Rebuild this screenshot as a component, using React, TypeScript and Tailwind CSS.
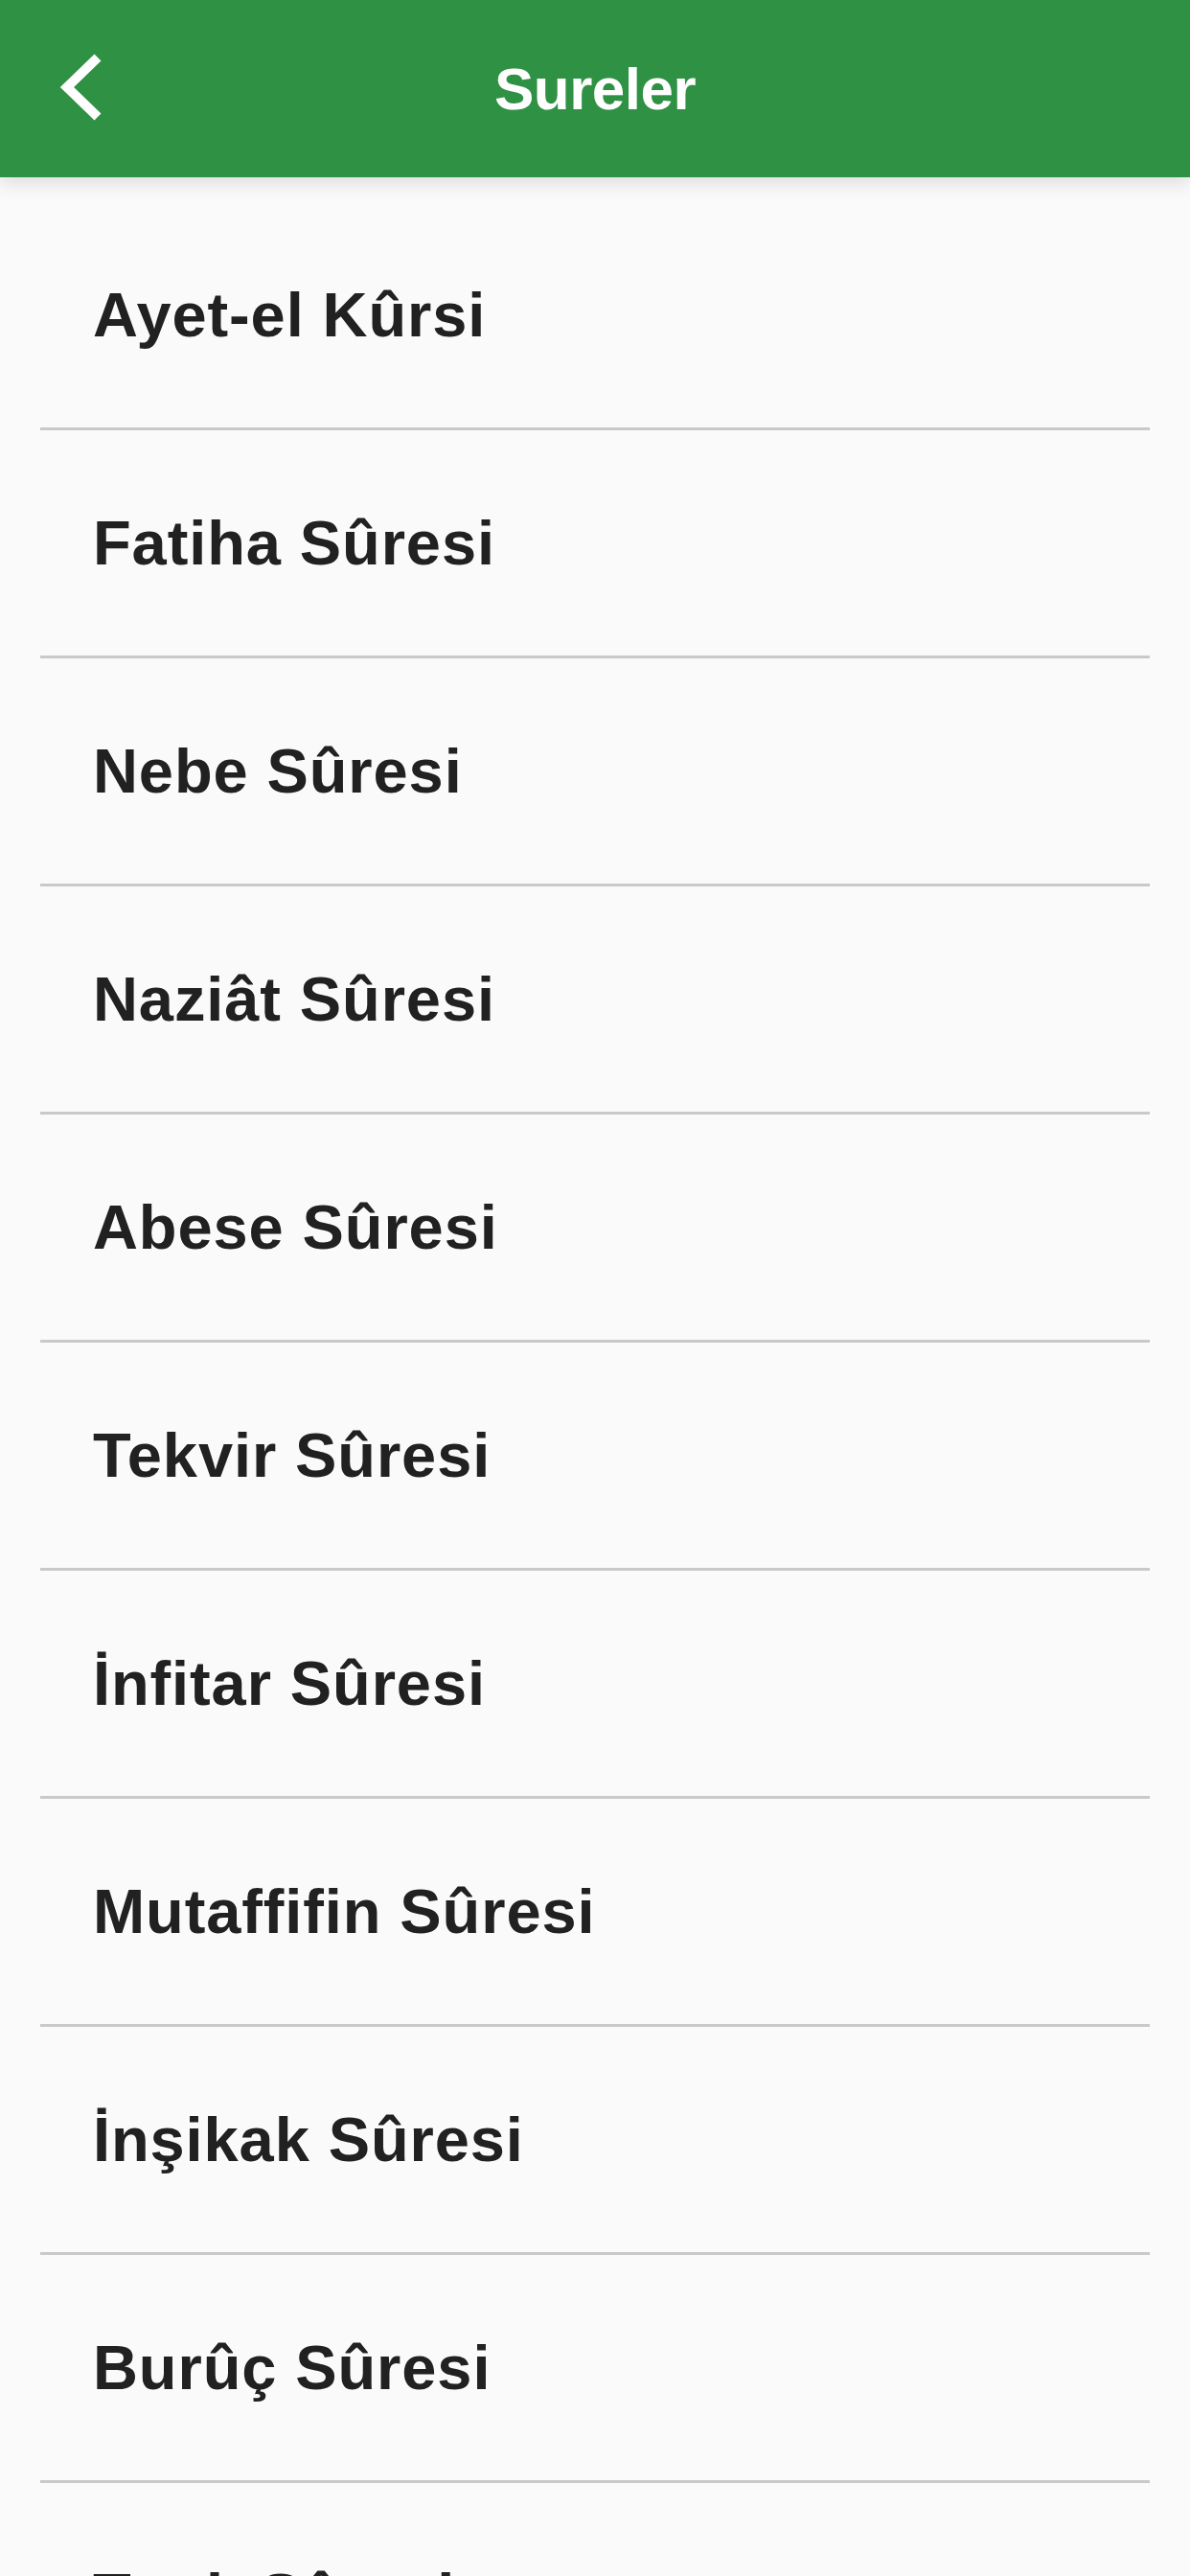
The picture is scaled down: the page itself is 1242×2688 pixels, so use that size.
const sureler = [
  "Ayet-el Kûrsi",
  "Fatiha Sûresi",
  "Nebe Sûresi",
  "Naziât Sûresi",
  "Abese Sûresi",
  "Tekvir Sûresi",
  "İnfitar Sûresi",
  "Mutaffifin Sûresi",
  "İnşikak Sûresi",
  "Burûç Sûresi",
  "Tarık Sûresi",
];

const BackIcon = () => (
  <svg width="46" height="70" viewBox="0 0 46 70" fill="none">
    <polyline
      points="40,4 8,35 40,66"
      stroke="#ffffff"
      strokeWidth="10"
      strokeLinejoin="miter"
    />
  </svg>
);

const App = () => {
  return (
    <div
      className="w-[1242px] h-[2688px] overflow-hidden bg-[#fafafa]"
      style={{ fontFamily: '"Liberation Sans", Arial, sans-serif' }}
    >
      <header className="relative z-10 h-[185px] bg-[#2f9143] flex items-center justify-center shadow-[0_6px_18px_rgba(0,0,0,0.12)]">
        <button className="absolute left-[62px] top-[56px]">
          <BackIcon />
        </button>
        <h1 className="text-white text-[62px] font-bold leading-none tracking-[-0.5px]">
          Sureler
        </h1>
      </header>

      <ul className="pt-[26px]">
        {sureler.map((name) => (
          <li key={name} className="mx-[42px] border-b-[3px] border-[#c9c9c9]">
            <div className="h-[235px] flex items-center pl-[55px] text-[65px] font-bold text-[#212121] tracking-[0.9px]">
              {name}
            </div>
          </li>
        ))}
      </ul>
    </div>
  );
};

export default App;
